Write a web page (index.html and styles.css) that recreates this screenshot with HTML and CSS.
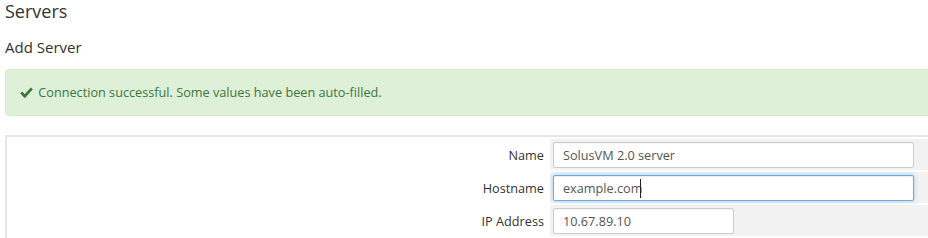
FILE: index.html
```html
<!DOCTYPE html>
<html lang="en">
<head>
    <meta charset="UTF-8">
    <meta name="viewport" content="width=device-width, initial-scale=1.0">
    <title>Servers - Add Server</title>
    <link rel="stylesheet" href="styles.css">
</head>
<body>
    <div class="content">
        <h1 class="page-title">Servers</h1>
        <h2 class="page-subtitle">Add Server</h2>

        <div class="alert alert-success">
            <svg class="icon-check" width="13" height="11" viewBox="0 0 13 11">
                <polyline points="1.2,5.6 4.8,9.2 11.8,1.4" fill="none" stroke="currentColor" stroke-width="2.8"/>
            </svg>
            Connection successful. Some values have been auto-filled.
        </div>

        <table class="form">
            <tr>
                <td class="fieldlabel">Name</td>
                <td class="fieldarea"><input type="text" class="input-400" value="SolusVM 2.0 server"></td>
            </tr>
            <tr>
                <td class="fieldlabel">Hostname</td>
                <td class="fieldarea">
                    <div class="input-wrap">
                        <input type="text" class="input-400 is-focused" value="example.com">
                        <span class="caret"></span>
                    </div>
                </td>
            </tr>
            <tr>
                <td class="fieldlabel">IP Address</td>
                <td class="fieldarea"><input type="text" class="input-200" value="10.67.89.10"></td>
            </tr>
        </table>
    </div>
</body>
</html>
```

FILE: styles.css
```css
:root {
    --text-color: #333;
    --success-bg: #dff0d8;
    --success-border: #d6e9c6;
    --success-text: #3c763d;
    --field-bg: #f2f2f2;
    --input-border: #ccc;
    --focus-color: #66afe9;
}

* {
    margin: 0;
    padding: 0;
    box-sizing: border-box;
}

body {
    font-family: "Open Sans", Arial, sans-serif;
    font-size: 12.7px;
    color: var(--text-color);
    background-color: #fff;
    overflow: hidden;
}

.content {
    width: 980px;
    padding: 2px 0 0 5px;
}

.page-title {
    font-size: 18px;
    font-weight: normal;
    line-height: 1.1;
}

.page-subtitle {
    font-size: 15px;
    font-weight: normal;
    line-height: 1.1;
    margin-top: 17px;
}

.alert {
    margin-top: 14px;
    margin-bottom: 19px;
    padding: 14px 14px 14px;
    line-height: 17px;
    border: 1px solid transparent;
    border-radius: 4px;
}

.alert-success {
    background-color: var(--success-bg);
    border-color: var(--success-border);
    color: var(--success-text);
}

.icon-check {
    vertical-align: -1px;
    margin-right: 2px;
}

.form {
    width: 100%;
    border: 2px solid #e6e8e8;
    border-spacing: 2px;
}

.form td {
    padding: 2px 3px;
    height: 31px;
}

.fieldlabel {
    width: 539px;
    text-align: right;
    padding-right: 4px !important;
    background-color: #fff;
}

.fieldarea {
    background-color: var(--field-bg);
}

.form input {
    display: block;
    height: 26px;
    padding: 0 9px;
    border: 1px solid var(--input-border);
    border-radius: 2px;
    font-family: inherit;
    font-size: 12.7px;
    color: #555;
    background-color: #fff;
    box-shadow: inset 0 1px 1px rgba(0,0,0,0.04);
}

.input-400 {
    width: 361px;
}

.input-200 {
    width: 181px;
}

.form input.is-focused {
    border-color: var(--focus-color);
    box-shadow: inset 0 1px 1px rgba(0,0,0,0.075), 0 0 4px rgba(102,175,233,0.6);
    outline: none;
}

.input-wrap {
    position: relative;
}

.caret {
    position: absolute;
    left: 87px;
    top: 4px;
    width: 1px;
    height: 19px;
    background-color: #222;
}
```
